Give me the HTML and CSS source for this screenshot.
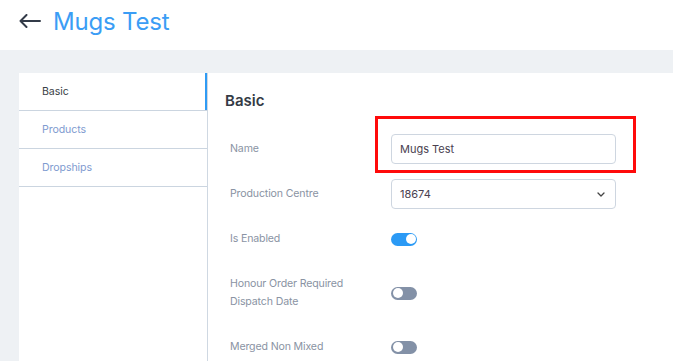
FILE: index.html
```html
<!doctype html>
<html lang="en">
  <head>
    <meta charset="UTF-8" />
    <meta name="viewport" content="width=device-width, initial-scale=1.0" />
    <title>Mugs Test</title>
    <link rel="stylesheet" href="styles.css">
  </head>
  <body>
    <header class="page-header">
      <a class="back-link" href="#">
        <svg width="22" height="14" viewBox="0 0 22 14" fill="none" stroke="#333b48" stroke-width="2" stroke-linecap="round" stroke-linejoin="round">
          <path d="M21 7H1.5M7.5 1L1.5 7l6 6" />
        </svg>
      </a>
      <h1 class="page-title">Mugs Test</h1>
    </header>

    <main class="page-body">
      <div class="card">
        <nav class="side-nav">
          <a class="side-item active" href="#">Basic</a>
          <a class="side-item" href="#">Products</a>
          <a class="side-item" href="#">Dropships</a>
        </nav>

        <section class="panel">
          <h2 class="panel-title">Basic</h2>
          <div class="form">
            <div class="form-row">
              <label class="form-label">Name</label>
              <div class="form-control highlight-wrap">
                <input class="text-input" type="text" value="Mugs Test" />
                <div class="highlight-box"></div>
              </div>
            </div>
            <div class="form-row">
              <label class="form-label">Production Centre</label>
              <div class="form-control">
                <div class="select">
                  <span>18674</span>
                  <svg width="8" height="5" viewBox="0 0 8 5" fill="none" stroke="#444" stroke-width="1.3" stroke-linecap="round" stroke-linejoin="round">
                    <path d="M1 1l3 3 3-3" />
                  </svg>
                </div>
              </div>
            </div>
            <div class="form-row">
              <label class="form-label">Is Enabled</label>
              <div class="form-control">
                <span class="toggle on"><span class="knob"></span></span>
              </div>
            </div>
            <div class="form-row tall">
              <label class="form-label">Honour Order Required<br>Dispatch Date</label>
              <div class="form-control">
                <span class="toggle"><span class="knob"></span></span>
              </div>
            </div>
            <div class="form-row">
              <label class="form-label">Merged Non Mixed</label>
              <div class="form-control">
                <span class="toggle"><span class="knob"></span></span>
              </div>
            </div>
          </div>
        </section>
      </div>
    </main>
  </body>
</html>
```

FILE: styles.css
```css
html, body {
  margin: 0;
  height: 100%;
  overflow: hidden;
}
body {
  font-family: Inter, "Open Sans", Arial, sans-serif;
  background-color: #eef1f4;
  color: #333b48;
}
.page-header {
  height: 50px;
  background-color: #ffffff;
  display: flex;
  align-items: center;
  padding-left: 19px;
  box-sizing: border-box;
}
.back-link {
  display: flex;
  margin-top: -8px;
}
.page-title {
  margin: -8px 0 0 12px;
  font-size: 24px;
  font-weight: 400;
  letter-spacing: -0.2px;
  color: #3b9df5;
}
.page-body {
  padding: 23px 0 0 19px;
}
.card {
  display: flex;
  background-color: #ffffff;
  min-height: 300px;
}
.side-nav {
  width: 188px;
  flex-shrink: 0;
  border-right: 1px solid #cfd8e2;
}
.side-item {
  display: flex;
  align-items: center;
  height: 37px;
  padding-left: 23px;
  border-bottom: 1px solid #cbd5e0;
  font-size: 10.6px;
  letter-spacing: -0.1px;
  color: #7f9bd0;
  text-decoration: none;
}
.side-item.active {
  color: #3a3f47;
  box-shadow: inset -2px 0 0 #2f9bf4;
}
.panel {
  flex: 1;
  padding: 18px 0 0 17px;
}
.panel-title {
  margin: 0 0 24px;
  font-size: 15px;
  font-weight: 600;
  color: #343a45;
}
.form {
  padding-left: 5px;
}
.form-row {
  display: flex;
  align-items: center;
  min-height: 30px;
  margin-bottom: 15px;
}
.form-row.tall {
  margin-top: 21px;
  margin-bottom: 21px;
}
.form-label {
  width: 161px;
  flex-shrink: 0;
  font-size: 10.6px;
  letter-spacing: -0.15px;
  line-height: 18px;
  color: #8a93a3;
}
.form-control {
  width: 225px;
}
.highlight-wrap {
  position: relative;
}
.highlight-box {
  position: absolute;
  left: -16px;
  top: -18px;
  width: 261px;
  height: 57px;
  box-sizing: border-box;
  border: 3px solid #ff0a0a;
}
.text-input,
.select {
  width: 100%;
  height: 30px;
  box-sizing: border-box;
  border: 1px solid #ced6e0;
  border-radius: 4px;
  padding: 0 8px;
  font-family: inherit;
  font-size: 11px;
  color: #4a4150;
  background-color: #ffffff;
  outline: none;
}
.select {
  display: flex;
  align-items: center;
  justify-content: space-between;
  padding-right: 10px;
}
.toggle {
  display: block;
  position: relative;
  width: 26px;
  height: 13px;
  border-radius: 7px;
  background-color: #8391a7;
}
.toggle.on {
  background-color: #2b9af5;
}
.knob {
  position: absolute;
  top: 1.5px;
  left: 1.5px;
  width: 10px;
  height: 10px;
  border-radius: 50%;
  background-color: #ffffff;
}
.toggle.on .knob {
  left: 14.5px;
}
```
